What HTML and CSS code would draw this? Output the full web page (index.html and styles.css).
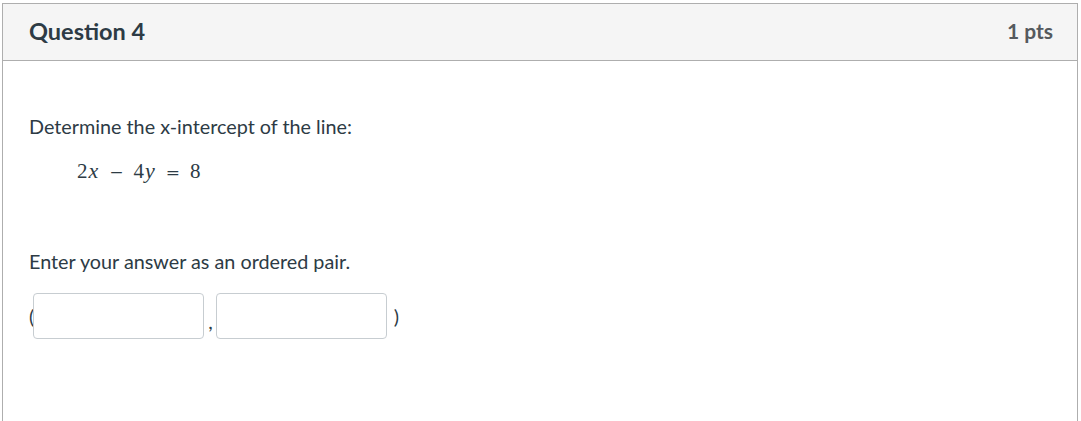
FILE: index.html
```html
<!DOCTYPE html>
<html lang="en">
<head>
<meta charset="utf-8">
<title>Question 4</title>
<link rel="stylesheet" href="styles.css">
</head>
<body>
<div class="question">
  <div class="q-header">
    <h2 class="q-title">Question 4</h2>
    <span class="q-points">1 pts</span>
  </div>
  <div class="q-body">
    <p class="q-text">Determine the x-intercept of the line:</p>
    <p class="q-math"><span class="n">2</span><i>x</i><span class="op">−</span><span class="n">4</span><i>y</i><span class="op">=</span><span class="n">8</span></p>
    <p class="q-text q-enter">Enter your answer as an ordered pair.</p>
    <div class="answer">
      <span class="paren">(</span>
      <input class="ans-input" type="text" aria-label="x">
      <span class="comma">,</span>
      <input class="ans-input" type="text" aria-label="y">
      <span class="paren close">)</span>
    </div>
  </div>
</div>
</body>
</html>
```
FILE: styles.css
```css
html, body {
  margin: 0;
  padding: 0;
  background: #ffffff;
}
body {
  padding: 3px 3px 0 2px;
  font-family: Lato, "Liberation Sans", sans-serif;
  color: #2d3b45;
}
.question {
  border: 1px solid #aeaeae;
  border-bottom: none;
  height: 440px;
  box-sizing: border-box;
}
.q-header {
  display: flex;
  align-items: center;
  justify-content: space-between;
  height: 57px;
  box-sizing: border-box;
  background: #f5f5f5;
  border-bottom: 1px solid #aeaeae;
  padding: 0 24px 3px 26px;
}
.q-title {
  margin: 0;
  font-size: 23.5px;
  font-weight: 700;
  color: #2d3b45;
}
.q-points {
  font-size: 21px;
  font-weight: 700;
  color: #555a5e;
}
.q-body {
  padding: 0 26px;
}
.q-text {
  margin: 0;
  font-size: 19.8px;
  line-height: 24px;
}
.q-body > .q-text:first-child {
  padding-top: 53px;
}
.q-math {
  margin: 21px 0 0 48px;
  height: 24px;
  font-family: "Liberation Serif", "DejaVu Serif", serif;
  font-size: 21px;
  line-height: 24px;
  color: #2d3b45;
}
.q-math i {
  font-family: "Liberation Serif", serif;
  font-size: 22px;
  margin-left: 1px;
}
.q-math .op {
  font-family: "DejaVu Serif", serif;
  font-size: 17px;
  line-height: 1;
  margin: 0 10px 0 11px;
}
.q-enter {
  margin-top: 66px;
}
.answer {
  display: flex;
  align-items: center;
  margin-top: 20px;
  margin-left: 0;
}
.paren, .comma {
  font-size: 19.8px;
  color: #2d3b45;
}
.paren {
  margin-right: -1px;
}
.comma {
  margin: 10px 3px 0 4px;
}
.paren.close {
  margin-left: 7px;
  margin-right: 0;
}
.ans-input {
  width: 171px;
  height: 46px;
  box-sizing: border-box;
  border: 1px solid #c7cdd1;
  border-radius: 4px;
  background: #fff;
  margin: 0;
  padding: 0 8px;
}
```
